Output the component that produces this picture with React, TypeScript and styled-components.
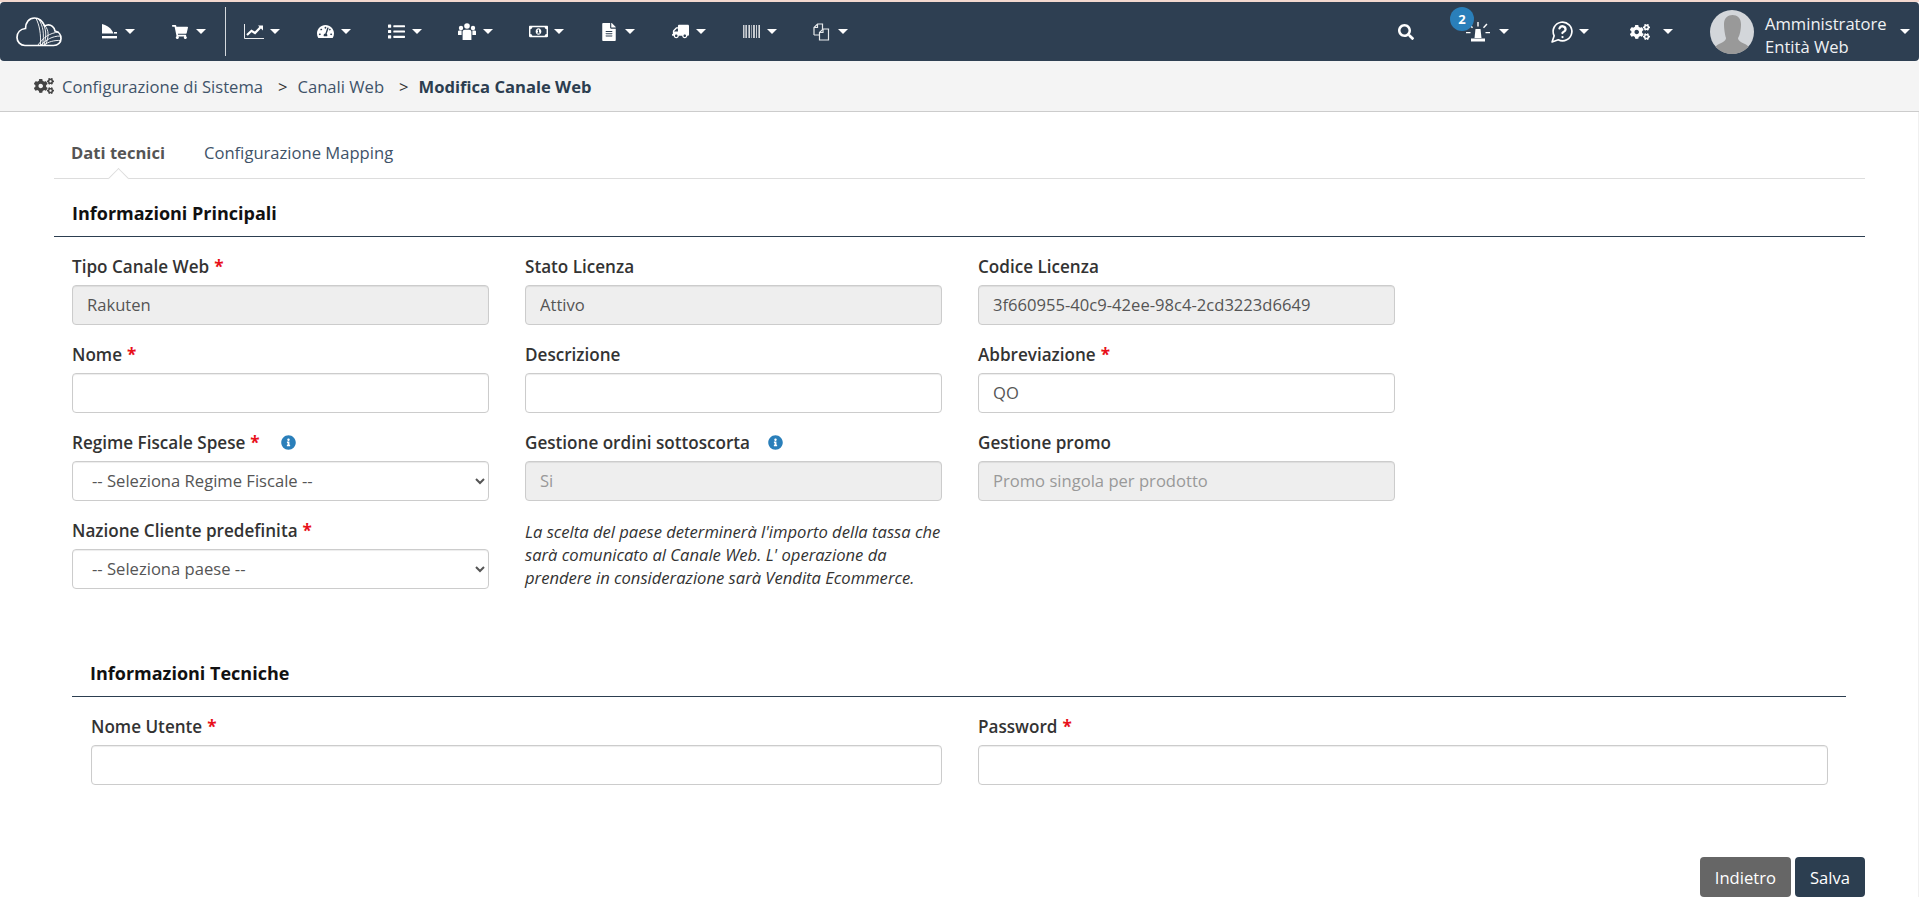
import styled, { createGlobalStyle } from 'styled-components';
import {
    FaShoppingCart,
    FaTachometerAlt,
    FaList,
    FaRegMoneyBillAlt,
    FaFileAlt,
    FaTruck,
    FaSearch,
    FaCogs,
    FaInfoCircle,
} from 'react-icons/fa';

const GlobalStyle = createGlobalStyle`
    * {
        box-sizing: border-box;
    }
    body {
        margin: 0;
        background: #fff;
        font-family: 'Open Sans', 'Liberation Sans', sans-serif;
        font-size: 16.6px;
        color: #333;
    }
`;

const LogoIcon = () => (
    <svg width="46" height="30" viewBox="0 0 46 30" fill="none" stroke="#fff">
        <path
            strokeWidth="1.7"
            d="M9 28.5H37.5C42 28.5 45 25.5 45 21.5C45 17.5 42.5 14.5 39 14C38.5 10 35 7.5 31.5 8C30.5 8.2 29.5 8.5 28.8 9C26.5 4 22.5 1 18.5 1C13 1 9.5 5.5 9.5 11.5C4.5 12 1 15.5 1 20.5C1 25 4.5 28.5 9 28.5Z"
        />
        <path
            strokeWidth="0.9"
            d="M20 1.5C23.5 8 25 17 24.5 28M23 2.5C27 9 28.5 17 26.5 28M26 5C30 11 31 18 28 28M29 9C33 13 33 20 29.5 28M22 28C27 21 33 16 43 15M25 28C30 23 36 19 44.5 19M28 28C32 25 38 23 45 23.5"
        />
    </svg>
);

const WeightIcon = () => (
    <svg width="15" height="15" viewBox="0 0 15 15" fill="#fff">
        <path d="M0 0L3 1C7 2.5 10 5.5 11.5 9.5L0 9.5Z" />
        <rect x="12" y="8" width="3" height="1.6" />
        <rect x="0" y="12" width="15" height="2.4" />
    </svg>
);

const ChartIcon = () => (
    <svg width="20" height="15" viewBox="0 0 20 15" fill="none" stroke="#fff">
        <path strokeWidth="0.9" d="M0.5 0V14.5H20" />
        <path strokeWidth="2.2" d="M3 11L7.5 6.8L11 9L16.5 3.2" />
        <path fill="#fff" stroke="none" d="M14 1.5H19V6.5Z" />
    </svg>
);

const UsersIcon = () => (
    <svg width="18" height="17" viewBox="0 0 18 17" fill="#fff">
        <circle cx="9" cy="3" r="2.8" />
        <circle cx="3" cy="5" r="2.2" />
        <circle cx="15" cy="5" r="2.2" />
        <path d="M0 8.5C0 7.8 0.8 7.5 1.5 7.5H3.6V12H0ZM14.4 7.5H16.5C17.2 7.5 18 7.8 18 8.5V12H14.4Z" />
        <path d="M4.6 17V9C4.6 7.6 5.6 6.8 7 6.8H11C12.4 6.8 13.4 7.6 13.4 9V17Z" />
    </svg>
);

const BarcodeIcon = () => (
    <svg width="17" height="13" viewBox="0 0 17 13">
        {[0, 2, 3, 5, 6, 8, 10, 11, 13, 15, 16].map((x, i) => (
            <rect
                key={x}
                x={x}
                y="0"
                width={i % 3 === 0 ? 1.5 : 1}
                height="13"
                fill="#fff"
                opacity={i % 2 === 0 ? 0.75 : 0.5}
            />
        ))}
    </svg>
);

const CopyIcon = () => (
    <svg width="18" height="18" viewBox="0 0 18 18" fill="none" stroke="#e6e9ec" strokeWidth="1.2">
        <path d="M1 12V4.5L4.5 1H9.5V6" />
        <path d="M6.5 17V9.5L10 6H15.5V17H6.5Z" fill="#2e3f52" />
        <path d="M1 12H6M4.5 1V4.5H1M10 6V9.5H6.5" />
    </svg>
);

const AlarmIcon = () => (
    <svg width="24" height="21" viewBox="0 0 24 21" fill="#fff">
        <path d="M8.5 17L9.5 8H14.5L15.5 17Z" />
        <rect x="5" y="17.5" width="14" height="3" />
        <path d="M11.3 1H12.7V5.5H11.3ZM2.5 3.5L3.6 2.6L7 6.2L6 7.2ZM21.5 3.5L20.4 2.6L17 6.2L18 7.2ZM0 11H4.5V12.3H0ZM19.5 11H24V12.3H19.5Z" />
    </svg>
);

const HelpIcon = () => (
    <svg width="25" height="25" viewBox="0 0 24 24" fill="none" stroke="#fff" strokeWidth="1.6" strokeLinecap="round" strokeLinejoin="round">
        <path d="M7.9 20A9 9 0 1 0 4 16.1L2 22Z" />
        <path strokeWidth="2.2" d="M9.09 9a3 3 0 0 1 5.83 1c0 2-3 2.5-3 3.5" />
        <path strokeWidth="2.2" d="M12 17.3h.01" />
    </svg>
);

const AvatarIcon = () => (
    <svg width="44" height="44" viewBox="0 0 44 44">
        <circle cx="22" cy="22" r="22" fill="#d3d6da" />
        <path
            fill="#999"
            d="M14 14C14 8 18 5 22.5 5C27 5 31 8 31 14C31 19 30 25 28 28C28 30 30 32 35 34C37 35 38 36 38.5 37C34 41.5 28 44 22 44C16 44 10 41.5 5.5 37C6 36 7 35 9 34C14 32 16 30 16 28C15 25 14 19 14 14Z"
        />
    </svg>
);

const TruckIcon = styled(FaTruck)`
    transform: scaleX(-1);
`;

const mainMenu = [
    [<WeightIcon />, <FaShoppingCart size={16} />],
    [
        <ChartIcon />,
        <FaTachometerAlt size={17} />,
        <FaList size={17} />,
        <UsersIcon />,
        <FaRegMoneyBillAlt size={19} />,
        <FaFileAlt size={18} />,
        <TruckIcon size={17} />,
        <BarcodeIcon />,
        <CopyIcon />,
    ],
];

const Required = () => <Star>*</Star>;

const App = () => {
    return (
        <Page>
            <GlobalStyle />
            <Navbar>
                <Logo>
                    <LogoIcon />
                </Logo>
                <MenuGroup>
                    {mainMenu[0].map((icon, i) => (
                        <MenuItem key={i}>
                            <MenuIcon>{icon}</MenuIcon>
                            <Caret />
                        </MenuItem>
                    ))}
                </MenuGroup>
                <Divider />
                <MenuGroup>
                    {mainMenu[1].map((icon, i) => (
                        <MenuItem key={i}>
                            <MenuIcon>{icon}</MenuIcon>
                            <Caret />
                        </MenuItem>
                    ))}
                </MenuGroup>
                <RightMenu>
                    <FaSearch size={16} />
                    <RightItem $left={52} $gap={9}>
                        <AlarmIcon />
                        <Badge>2</Badge>
                        <Caret />
                    </RightItem>
                    <RightItem $left={41} $gap={4}>
                        <HelpIcon />
                        <Caret />
                    </RightItem>
                    <RightItem $left={41} $gap={13}>
                        <FaCogs size={20} />
                        <Caret />
                    </RightItem>
                    <RightItem $left={37} $gap={11}>
                        <AvatarIcon />
                        <UserText>
                            <span>Amministratore</span>
                            <span>Entità Web</span>
                        </UserText>
                        <Caret />
                    </RightItem>
                </RightMenu>
            </Navbar>

            <Breadcrumb>
                <FaCogs size={20} color="#444" />
                <CrumbLink>Configurazione di Sistema</CrumbLink>
                <CrumbSep>&gt;</CrumbSep>
                <CrumbLink>Canali Web</CrumbLink>
                <CrumbSep>&gt;</CrumbSep>
                <CrumbCurrent>Modifica Canale Web</CrumbCurrent>
            </Breadcrumb>

            <Main>
                <Tabs>
                    <Tab $active>Dati tecnici</Tab>
                    <Tab>Configurazione Mapping</Tab>
                </Tabs>

                <SectionHead>Informazioni Principali</SectionHead>
                <MainGrid>
                    <Field>
                        <Label>
                            Tipo Canale Web <Required />
                        </Label>
                        <Input disabled defaultValue="Rakuten" />
                    </Field>
                    <Field>
                        <Label>Stato Licenza</Label>
                        <Input disabled defaultValue="Attivo" />
                    </Field>
                    <Field>
                        <Label>Codice Licenza</Label>
                        <Input disabled defaultValue="3f660955-40c9-42ee-98c4-2cd3223d6649" />
                    </Field>
                    <Field>
                        <Label>
                            Nome <Required />
                        </Label>
                        <Input />
                    </Field>
                    <Field>
                        <Label>Descrizione</Label>
                        <Input />
                    </Field>
                    <Field>
                        <Label>
                            Abbreviazione <Required />
                        </Label>
                        <Input defaultValue="QO" />
                    </Field>
                    <Field>
                        <Label>
                            Regime Fiscale Spese <Required />
                            <InfoMark $left={16}>
                                <FaInfoCircle size={15} />
                            </InfoMark>
                        </Label>
                        <Select>
                            <option>-- Seleziona Regime Fiscale --</option>
                        </Select>
                    </Field>
                    <Field>
                        <Label>
                            Gestione ordini sottoscorta
                            <InfoMark $left={13}>
                                <FaInfoCircle size={15} />
                            </InfoMark>
                        </Label>
                        <Input disabled placeholder="Si" />
                    </Field>
                    <Field>
                        <Label>Gestione promo</Label>
                        <Input disabled placeholder="Promo singola per prodotto" />
                    </Field>
                    <Field>
                        <Label>
                            Nazione Cliente predefinita <Required />
                        </Label>
                        <Select>
                            <option>-- Seleziona paese --</option>
                        </Select>
                    </Field>
                    <HelpText>
                        La scelta del paese determinerà l'importo della tassa che sarà comunicato al
                        Canale Web. L' operazione da prendere in considerazione sarà Vendita
                        Ecommerce.
                    </HelpText>
                </MainGrid>

                <TechSection>
                    <SectionHead>Informazioni Tecniche</SectionHead>
                    <TechGrid>
                        <Field>
                            <Label>
                                Nome Utente <Required />
                            </Label>
                            <Input />
                        </Field>
                        <Field>
                            <Label>
                                Password <Required />
                            </Label>
                            <Input type="password" />
                        </Field>
                    </TechGrid>
                </TechSection>

                <Actions>
                    <Button $bg="#666">Indietro</Button>
                    <Button $bg="#2c3e50">Salva</Button>
                </Actions>
            </Main>
        </Page>
    );
};

export default App;

const Page = styled.div`
    border-top: 2px solid #f3d8cf;
    background: #fff;
    min-height: 918px;
`;

const Navbar = styled.nav`
    display: flex;
    align-items: center;
    height: 59px;
    padding: 0 9px 0 16px;
    background: #2e3f52;
    border-radius: 4px;
    color: #fff;
`;

const Logo = styled.div`
    display: flex;
    width: 46px;
    margin-right: 35px;
`;

const MenuGroup = styled.div`
    display: flex;
    gap: 33px;
`;

const MenuItem = styled.div`
    display: flex;
    align-items: center;
    gap: 4px;
`;

const MenuIcon = styled.div`
    display: flex;
    align-items: center;
    justify-content: center;
    width: 24px;
    height: 24px;
`;

const Caret = styled.span`
    width: 0;
    height: 0;
    border-top: 5px solid #fff;
    border-left: 5px solid transparent;
    border-right: 5px solid transparent;
`;

const Divider = styled.div`
    width: 1px;
    height: 49px;
    margin: 0 16px 0 19px;
    background: #d5d9dd;
`;

const RightMenu = styled.div`
    display: flex;
    align-items: center;
    margin-left: auto;
`;

const RightItem = styled.div<{ $left: number; $gap: number }>`
    position: relative;
    display: flex;
    align-items: center;
    gap: ${(props) => props.$gap}px;
    margin-left: ${(props) => props.$left}px;
`;

const Badge = styled.span`
    position: absolute;
    top: -14px;
    left: -16px;
    display: flex;
    align-items: center;
    justify-content: center;
    width: 24px;
    height: 24px;
    border-radius: 50%;
    background: #2a7fba;
    color: #fff;
    font-size: 13px;
    font-weight: 700;
`;

const UserText = styled.div`
    display: flex;
    flex-direction: column;
    width: 124px;
    padding-top: 6px;
    line-height: 23px;
    color: #f0f2f4;
`;

const Breadcrumb = styled.div`
    display: flex;
    align-items: center;
    height: 51px;
    padding-left: 34px;
    background: #f4f4f4;
    border-bottom: 1px solid #ccc;
`;

const CrumbLink = styled.span`
    margin-left: 8px;
    color: #3f5369;
`;

const CrumbSep = styled.span`
    margin-left: 15px;
    margin-right: 2px;
    color: #333;
`;

const CrumbCurrent = styled.span`
    margin-left: 8px;
    font-weight: 700;
    color: #2c3e50;
`;

const Main = styled.main`
    padding: 0 53px 0 54px;
    border-right: 1px solid #f0f0f0;
`;

const Tabs = styled.div`
    display: flex;
    gap: 39px;
    height: 67px;
    padding: 29px 0 0 17px;
    border-bottom: 1px solid #ddd;
`;

const Tab = styled.div<{ $active?: boolean }>`
    position: relative;
    height: 24px;
    line-height: 24px;
    font-weight: ${(props) => (props.$active ? 700 : 400)};
    color: ${(props) => (props.$active ? '#555' : '#3f5369')};

    ${(props) =>
        props.$active &&
        `
        &::after {
            content: '';
            position: absolute;
            left: 50%;
            top: 30px;
            width: 14px;
            height: 14px;
            margin-left: -7px;
            background: #fff;
            border-top: 1px solid #ddd;
            border-left: 1px solid #ddd;
            transform: rotate(45deg);
        }
    `}
`;

const SectionHead = styled.h3`
    margin: 0;
    height: 58px;
    padding: 22px 0 0 18px;
    line-height: 24px;
    border-bottom: 1px solid #2c3e50;
    font-size: 18px;
    font-weight: 700;
    color: #111;
`;

const MainGrid = styled.div`
    display: grid;
    grid-template-columns: repeat(3, 416.5px);
    column-gap: 36.5px;
    row-gap: 19px;
    padding: 19px 0 0 18px;
`;

const TechSection = styled.section`
    margin: 0 19px 0 18px;
    padding-top: 50px;
`;

const TechGrid = styled.div`
    display: grid;
    grid-template-columns: 850.5px 850px;
    column-gap: 36.5px;
    padding: 19px 0 0 19px;
`;

const Field = styled.div`
    display: flex;
    flex-direction: column;
`;

const Label = styled.label`
    display: flex;
    align-items: center;
    gap: 5px;
    height: 22px;
    padding-bottom: 2px;
    margin-bottom: 7px;
    font-size: 17.1px;
    font-weight: 600;
    color: #333;
`;

const Star = styled.span`
    color: #e8101a;
    font-weight: 700;
`;

const InfoMark = styled.span<{ $left: number }>`
    display: flex;
    margin-left: ${(props) => props.$left}px;
    color: #2a7fba;
`;

const Input = styled.input`
    width: 100%;
    height: 40px;
    padding: 0 14px 2px;
    border: 1px solid #ccc;
    border-radius: 4px;
    background: #fff;
    box-shadow: inset 0 1px 1px rgba(0, 0, 0, 0.075);
    font: inherit;
    color: #555;

    &:disabled {
        background: #eee;
    }
    &::placeholder {
        color: #999;
        opacity: 1;
    }
`;

const Select = styled.select`
    width: 100%;
    height: 40px;
    padding: 0 15px 2px;
    border: 1px solid #ccc;
    border-radius: 4px;
    background: #fff;
    box-shadow: inset 0 1px 1px rgba(0, 0, 0, 0.075);
    font: inherit;
    color: #555;
`;

const HelpText = styled.p`
    margin: 0;
    font-style: italic;
    line-height: 23px;
    color: #333;
`;

const Actions = styled.div`
    display: flex;
    justify-content: flex-end;
    gap: 4px;
    margin-top: 72px;
`;

const Button = styled.button<{ $bg: string }>`
    height: 40px;
    padding: 0 15px;
    border: none;
    border-radius: 4px;
    background: ${(props) => props.$bg};
    font: inherit;
    color: #fff;
`;
